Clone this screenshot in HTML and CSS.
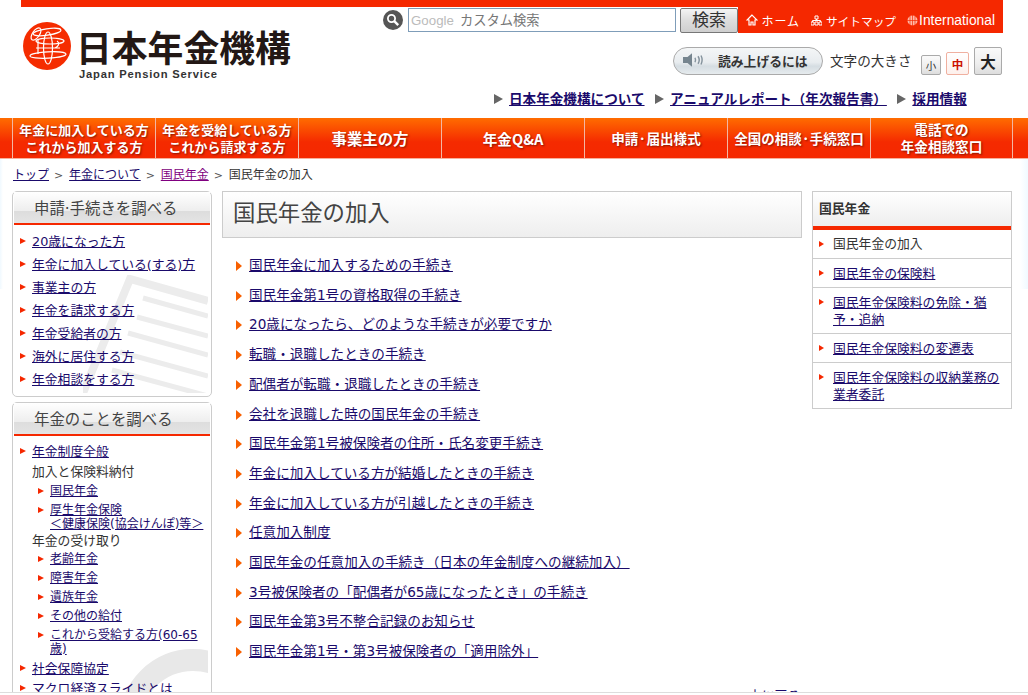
FILE: index.html
```html
<!DOCTYPE html>
<html lang="ja">
<head>
    <meta charset="UTF-8" />
    <title>国民年金の加入｜日本年金機構</title>
    <link rel="stylesheet" href="styles.css">
</head>
<body>
    <header class="site-header">
        <div class="top-bar"></div>
        <div class="header-main">
            <div class="logo">
                <svg class="logo-mark" width="48" height="48" viewBox="0 0 48 48">
                    <circle cx="24" cy="24" r="24" fill="#f52c00"/>
                    <g fill="none" stroke="#fff" stroke-width="1.2">
                        <ellipse cx="24" cy="10" rx="14" ry="3.2" transform="rotate(-8 24 10)"/>
                        <ellipse cx="13" cy="12" rx="3.5" ry="7" transform="rotate(35 13 12)"/>
                        <ellipse cx="27" cy="19" rx="14" ry="3"/>
                        <ellipse cx="25" cy="33" rx="18" ry="3.2" transform="rotate(-3 25 33)"/>
                        <ellipse cx="25" cy="26" rx="4.5" ry="16"/>
                        <path d="M15 18v14M13 26h24M34 19c3 2 2 5-2 7"/>
                    </g>
                </svg>
                <div class="logo-text">
                    <div class="logo-ja">日本年金機構</div>
                    <div class="logo-en">Japan Pension Service</div>
                </div>
            </div>
            <div class="header-tools">
                <div class="tool-row">
                    <svg class="search-icon" width="20" height="20" viewBox="0 0 20 20">
                        <circle cx="10" cy="10" r="10" fill="#555"/>
                        <circle cx="8.5" cy="8.5" r="3.6" fill="none" stroke="#fff" stroke-width="1.8"/>
                        <path d="M11.2 11.2l4 4" stroke="#fff" stroke-width="2.4"/>
                    </svg>
                    <div class="search-box"><span class="search-google">Google</span>カスタム検索</div>
                    <div class="search-button">検索</div>
                    <ul class="utility-links">
                        <li class="home-link">
                            <svg width="12" height="12" viewBox="0 0 12 12"><path d="M6 1L1 6h2v5h2V8h2v3h2V6h2z" fill="none" stroke="#fff" stroke-width="1.2"/></svg>
                            ホーム
                        </li>
                        <li class="map-link">
                            <svg width="11" height="11" viewBox="0 0 11 11"><path d="M4 1h3v3H4zM0 7h3v3H0zM4 7h3v3H4zM8 7h3v3H8zM5.5 4v2M1.5 7V5.5h8V7" fill="none" stroke="#fff"/></svg>
                            サイトマップ
                        </li>
                        <li class="intl-link">
                            <svg width="11" height="11" viewBox="0 0 11 11"><circle cx="5.5" cy="5.5" r="5" fill="#ffb9a8"/><path d="M0 5.5h11M5.5 0v11M3 1v9M8 1v9" stroke="#f52800" stroke-width=".7"/></svg>
                            International
                        </li>
                    </ul>
                </div>
                <div class="tool-row voice-row">
                    <div class="voice-button">
                        <svg width="27" height="14" viewBox="0 0 36 18">
                            <path d="M0 5h6l6-5v18l-6-5H0z" fill="#76858f"/>
                            <path d="M16 6c1 2 1 4 0 6M20 4c2 3 2 7 0 10M24 3c2 4 2 8 0 12" fill="none" stroke="#84929c" stroke-width="1.9"/>
                        </svg>
                        読み上げるには
                    </div>
                    <span class="size-label">文字の大きさ</span>
                    <div class="size-button size-small">小</div>
                    <div class="size-button size-medium">中</div>
                    <div class="size-button size-large">大</div>
                </div>
                <ul class="sub-links">
                    <li><a href="#">日本年金機構について</a></li>
                    <li><a href="#">アニュアルレポート（年次報告書）</a></li>
                    <li><a href="#">採用情報</a></li>
                </ul>
            </div>
        </div>
    </header>

    <nav class="global-nav">
        <a class="nav-item small" href="#">年金に加入している方<br>これから加入する方</a>
        <a class="nav-item small" href="#">年金を受給している方<br>これから請求する方</a>
        <a class="nav-item large" href="#">事業主の方</a>
        <a class="nav-item qa" href="#">年金Q&amp;A</a>
        <a class="nav-item" href="#">申請·届出様式</a>
        <a class="nav-item small wide" href="#">全国の相談·手続窓口</a>
        <a class="nav-item" href="#">電話での<br>年金相談窓口</a>
    </nav>

    <div class="page-body">
        <div class="breadcrumb">
            <a href="#">トップ</a><span class="sep">&gt;</span>
            <a href="#">年金について</a><span class="sep">&gt;</span>
            <a class="visited" href="#">国民年金</a><span class="sep">&gt;</span>
            国民年金の加入
        </div>

        <div class="columns">
            <aside class="left-col">
                <section class="side-box">
                    <svg class="side-deco" width="125" height="118" viewBox="0 0 125 118">
                        <g fill="none" stroke="#ececec">
                            <path d="M0 118L47 4L125 26" stroke-width="8"/>
                            <path d="M60 23L125 41M54 42L125 61M45 58L125 80M37 77L125 101M29 95L125 121" stroke-width="5"/>
                        </g>
                    </svg>
                    <h2 class="side-title">申請·手続きを調べる</h2>
                    <ul class="side-list">
                        <li><a href="#">20歳になった方</a></li>
                        <li><a href="#">年金に加入している(する)方</a></li>
                        <li><a href="#">事業主の方</a></li>
                        <li><a href="#">年金を請求する方</a></li>
                        <li><a href="#">年金受給者の方</a></li>
                        <li><a href="#">海外に居住する方</a></li>
                        <li><a href="#">年金相談をする方</a></li>
                    </ul>
                </section>
                <section class="side-box">
                    <svg class="side-deco deco-arc" width="85" height="60" viewBox="0 0 85 60">
                        <circle cx="70" cy="76" r="63" fill="none" stroke="#e8e8e8" stroke-width="22"/>
                    </svg>
                    <h2 class="side-title">年金のことを調べる</h2>
                    <ul class="side-list tree">
                        <li class="loose"><a href="#">年金制度全般</a></li>
                        <li class="plain loose">加入と保険料納付</li>
                        <li class="sub"><a href="#">国民年金</a></li>
                        <li class="sub tight"><a href="#">厚生年金保険<br>＜健康保険(協会けんぽ)等＞</a></li>
                        <li class="plain">年金の受け取り</li>
                        <li class="sub"><a href="#">老齢年金</a></li>
                        <li class="sub"><a href="#">障害年金</a></li>
                        <li class="sub"><a href="#">遺族年金</a></li>
                        <li class="sub"><a href="#">その他の給付</a></li>
                        <li class="sub"><a href="#">これから受給する方(60-65歳)</a></li>
                        <li class="loose"><a href="#">社会保障協定</a></li>
                        <li><a href="#">マクロ経済スライドとは</a></li>
                    </ul>
                </section>
            </aside>

            <main class="main-col">
                <h1 class="page-title">国民年金の加入</h1>
                <ul class="link-list">
                    <li><a href="#">国民年金に加入するための手続き</a></li>
                    <li><a href="#">国民年金第1号の資格取得の手続き</a></li>
                    <li><a href="#">20歳になったら、どのような手続きが必要ですか</a></li>
                    <li><a href="#">転職・退職したときの手続き</a></li>
                    <li><a href="#">配偶者が転職・退職したときの手続き</a></li>
                    <li><a href="#">会社を退職した時の国民年金の手続き</a></li>
                    <li><a href="#">国民年金第1号被保険者の住所・氏名変更手続き</a></li>
                    <li><a href="#">年金に加入している方が結婚したときの手続き</a></li>
                    <li><a href="#">年金に加入している方が引越したときの手続き</a></li>
                    <li><a href="#">任意加入制度</a></li>
                    <li><a href="#">国民年金の任意加入の手続き（日本の年金制度への継続加入）</a></li>
                    <li><a href="#">3号被保険者の「配偶者が65歳になったとき」の手続き</a></li>
                    <li><a href="#">国民年金第3号不整合記録のお知らせ</a></li>
                    <li><a href="#">国民年金第1号・第3号被保険者の「適用除外」</a></li>
                </ul>
                <div class="back-top"><a href="#">上に戻る</a></div>
            </main>

            <aside class="right-col">
                <h2 class="local-title">国民年金</h2>
                <ul class="local-list">
                    <li>国民年金の加入</li>
                    <li><a href="#">国民年金の保険料</a></li>
                    <li><a href="#">国民年金保険料の免除・猶予・追納</a></li>
                    <li><a href="#">国民年金保険料の変遷表</a></li>
                    <li><a href="#">国民年金保険料の収納業務の業者委託</a></li>
                </ul>
            </aside>
        </div>
    </div>
    <div class="window-edge"></div>
</body>
</html>
```

FILE: styles.css
```css
* {
    box-sizing: border-box;
}

html, body {
    height: 100%;
    overflow: hidden;
}

body {
    margin: 0;
    font-family: "DejaVu Sans", "Noto Sans CJK JP", sans-serif;
    color: #333;
    background: #fff;
}

ul {
    list-style: none;
    margin: 0;
    padding: 0;
}

a {
    color: #1a0a6b;
}

/* header */
.site-header {
    height: 118px;
    padding: 0 25px 0 21px;
}

.top-bar {
    height: 7px;
    background: #f52800;
}

.header-main {
    display: flex;
    justify-content: space-between;
}

.logo {
    display: flex;
    gap: 5px;
    margin: 15px 0 0 2px;
}

.logo-ja {
    font-family: "Noto Sans CJK JP", sans-serif;
    font-size: 35.8px;
    font-weight: 700;
    line-height: 36px;
    color: #231815;
    margin-top: 6px;
}

.logo-en {
    font-family: "Liberation Sans", sans-serif;
    font-size: 11.2px;
    font-weight: 700;
    line-height: 14px;
    letter-spacing: 0.8px;
    color: #333;
    margin-top: 3px;
    margin-left: 3px;
}

.header-tools {
    width: 620px;
}

.tool-row {
    display: flex;
    align-items: flex-start;
}

.search-icon {
    margin: 3px 5px 0 0;
}

.search-box {
    width: 268px;
    height: 24px;
    margin-top: 1px;
    border: 1px solid #7f9db9;
    padding-left: 2px;
    font-size: 13.3px;
    line-height: 23px;
    color: #777;
}

.search-google {
    font-family: "Liberation Sans", sans-serif;
    color: #bbb;
    margin-right: 6px;
}

.search-button {
    width: 58px;
    height: 25px;
    margin: 1px 0 0 4px;
    border: 1px solid #777;
    border-radius: 2px;
    background: linear-gradient(#f4f4f4, #ddd 50%, #cfcfcf);
    font-size: 17px;
    line-height: 23px;
    text-align: center;
    color: #333;
}

.utility-links {
    flex: 1;
    height: 26px;
    display: flex;
    align-items: center;
    justify-content: flex-end;
    gap: 11px;
    padding-right: 8px;
    background: #f52800;
    color: #fff;
    font-size: 12px;
}

.utility-links li {
    display: flex;
    align-items: center;
    gap: 2px;
}

.utility-links .home-link {
    gap: 4px;
    letter-spacing: 0.9px;
}

.utility-links .map-link {
    gap: 4px;
    font-size: 11.7px;
}

.utility-links .intl-link {
    gap: 1px;
    font-family: "Liberation Sans", sans-serif;
    font-size: 13.8px;
}

.voice-row {
    margin-top: 14px;
    height: 28px;
    padding-left: 290px;
    align-items: flex-end;
}

.voice-button {
    width: 150px;
    height: 28px;
    display: flex;
    align-items: center;
    gap: 8px;
    padding: 0 0 2px 9px;
    border: 1px solid #aaa;
    border-radius: 14px;
    background: linear-gradient(#f4f6f7, #e8ecef 55%, #d5dde2 70%, #e6ebee);
    font-size: 12.8px;
    font-weight: 700;
    color: #333;
    white-space: nowrap;
}

.size-label {
    width: 82px;
    margin: 0 9px 2px 7px;
    align-self: center;
    font-size: 13.6px;
    white-space: nowrap;
}

.size-button {
    display: flex;
    align-items: center;
    justify-content: center;
    border: 1px solid #aaa;
    border-radius: 2px;
    background: linear-gradient(#fafafa, #eee 60%, #ddd);
}

.size-small {
    width: 20px;
    height: 20px;
    font-size: 10.5px;
}

.size-medium {
    width: 23px;
    height: 23px;
    margin: 0 5px;
    border-color: #f0b0a0;
    background: linear-gradient(#fff, #fdf0ec);
    color: #cc1100;
    font-size: 11.5px;
    font-weight: 700;
}

.size-large {
    width: 28px;
    height: 28px;
    font-size: 15.5px;
    font-weight: 700;
    color: #222;
}

.sub-links {
    display: flex;
    margin-top: 14px;
    padding-left: 111px;
    font-size: 13.6px;
    font-weight: 700;
    line-height: 20px;
}

.sub-links li {
    display: flex;
    align-items: center;
    margin-right: 10.5px;
}

.sub-links li::before {
    content: "";
    margin-right: 6px;
    border-left: 9px solid #666;
    border-top: 5px solid transparent;
    border-bottom: 5px solid transparent;
}

/* global nav */
.global-nav {
    height: 41px;
    display: flex;
    padding: 0 15px 0 12px;
    border-bottom: 1px solid #f8b09c;
    background: linear-gradient(#ff6c00, #f52a00 60%, #f52800);
}

.nav-item {
    width: 143px;
    display: flex;
    align-items: center;
    justify-content: center;
    border-left: 1px solid #f3b7a4;
    color: #fff;
    font-family: "Noto Sans CJK JP", sans-serif;
    font-size: 13.6px;
    font-weight: 700;
    line-height: 17px;
    text-align: center;
    text-decoration: none;
    text-shadow: 1px 1px 2px #8a1500;
}

.nav-item:last-child {
    border-right: 1px solid #f3b7a4;
}

.nav-item.small {
    font-size: 13px;
}

.nav-item.wide {
    font-size: 13.5px;
}

.nav-item.large {
    font-size: 15.4px;
}

.nav-item.qa {
    font-size: 14.6px;
}

/* body */
.page-body {
    padding: 0 16px 0 12px;
    background: linear-gradient(90deg, #f0f9ff, #fff 3px, #fff calc(100% - 8px), #f0f9ff) no-repeat;
    background-size: 100% 130px;
}

.breadcrumb {
    height: 32px;
    font-size: 12px;
    line-height: 32px;
    padding-left: 1px;
}

.breadcrumb .visited {
    color: #800080;
}

.sep {
    margin: 0 2px 0 5px;
    font-size: 11px;
    color: #555;
}

.columns {
    display: flex;
    align-items: flex-start;
    gap: 10px;
}

.left-col {
    width: 200px;
    flex-shrink: 0;
}

.side-box {
    position: relative;
    margin-bottom: 5px;
    padding: 0 1px 5px;
    border: 1px solid #ccc;
    border-radius: 5px;
}

.side-deco {
    position: absolute;
    right: 3px;
    bottom: 3px;
}

.deco-arc {
    bottom: auto;
    top: 244px;
}

.side-title {
    position: relative;
    height: 33px;
    margin: 0;
    padding-left: 20px;
    border-bottom: 2px solid #f52800;
    background: linear-gradient(#fff, #eee 60%, #ddd 62%, #e4e4e4);
    font-size: 15.4px;
    font-weight: 400;
    line-height: 34px;
    color: #444;
}

.side-list {
    position: relative;
    padding: 5px 5px 0;
    font-size: 12.8px;
    line-height: 23px;
}

.side-list li {
    position: relative;
    padding-left: 13px;
}

.side-list li::before,
.local-list li::before {
    content: "";
    position: absolute;
    left: 1px;
    top: 8px;
    border-left: 6px solid #f52800;
    border-top: 3.5px solid transparent;
    border-bottom: 3.5px solid transparent;
}

.side-list.tree {
    padding-top: 6px;
    line-height: 13.5px;
}

.tree li {
    padding-top: 3px;
    padding-bottom: 2.5px;
}

.tree li.loose {
    padding-bottom: 3.5px;
}

.tree li.tight {
    padding-bottom: 0;
}

.tree li::before {
    top: 6px;
}

.tree li.plain::before {
    display: none;
}

.tree li.sub {
    margin-left: 18px;
    font-size: 12px;
}

/* center */
.main-col {
    width: 580px;
    flex-shrink: 0;
}

.page-title {
    height: 47px;
    margin: 0;
    padding-left: 10px;
    border: 1px solid #ccc;
    background: linear-gradient(#fff, #eee);
    font-size: 22.4px;
    font-weight: 400;
    line-height: 43px;
    color: #444;
}

.link-list {
    padding: 13px 0 0 13px;
    font-size: 13.6px;
    line-height: 29.7px;
}

.link-list li {
    position: relative;
    padding-left: 14px;
}

.link-list li::before {
    content: "";
    position: absolute;
    left: 1px;
    top: 10px;
    border-left: 6px solid #f86000;
    border-top: 5px solid transparent;
    border-bottom: 5px solid transparent;
}

.back-top {
    margin-top: 18px;
    padding-left: 527px;
    font-size: 12.8px;
    white-space: nowrap;
}

/* right */
.right-col {
    width: 200px;
    flex-shrink: 0;
    border: 1px solid #ccc;
}

.local-title {
    height: 38px;
    margin: 0;
    padding-left: 6px;
    border-bottom: 4px solid #f52800;
    background: linear-gradient(#fff, #eee);
    font-size: 12.8px;
    font-weight: 700;
    line-height: 33px;
}

.local-list {
    font-size: 12.8px;
    line-height: 17px;
}

.local-list li {
    position: relative;
    padding: 6px 8px 5px 20px;
    border-bottom: 1px solid #ccc;
}

.local-list li:first-child {
    padding-top: 5px;
    padding-bottom: 6px;
}

.local-list li:last-child {
    border-bottom: none;
}

.local-list li::before {
    left: 6px;
    top: 11px;
    border-left-width: 5px;
}

.window-edge {
    position: fixed;
    left: 0;
    right: 0;
    bottom: 0;
    height: 3px;
    border-top: 1px solid #ddd;
    background: #fff;
}
```
